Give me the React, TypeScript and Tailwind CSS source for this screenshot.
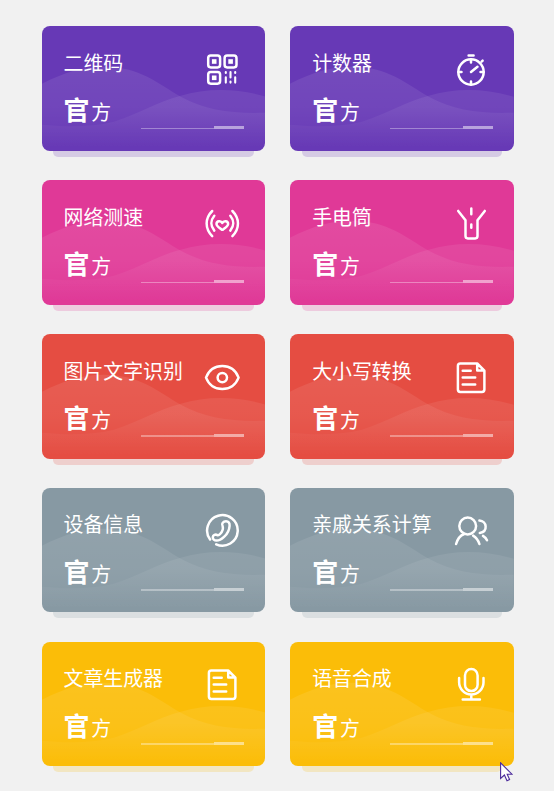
import type { ReactNode } from "react";

const QrIcon = () => (
  <>
    <rect x="4.2" y="3.6" width="11.9" height="11.8" rx="2.6" />
    <rect x="20.6" y="3.6" width="11.9" height="11.8" rx="2.6" />
    <rect x="4.2" y="19.9" width="11.9" height="11.8" rx="2.6" />
    <g fill="currentColor" stroke="none">
      <rect x="7.9" y="7.2" width="4.6" height="4.6" />
      <rect x="24.3" y="7.2" width="4.6" height="4.6" />
      <rect x="7.9" y="23.5" width="4.6" height="4.6" />
    </g>
    <path d="M21.8 20v1M21.8 25.2v5.4M26.5 20v5.4M26.5 29.6v1M31.2 20v1M31.2 25.2v5.4" strokeWidth="2.1" />
  </>
);

const StopwatchIcon = () => (
  <>
    <circle cx="18" cy="20" r="12.7" />
    <path d="M15.6 3.6h5M18 7.5v3M18 29.5v3M5.5 20h3M27.5 20h3M18 20l6.5-5.2M28.6 9.6l1-.9" />
  </>
);

const SpeedIcon = () => (
  <>
    <path d="M8.2 5C.8 12.5.8 22.5 8.2 30.2M10.3 9.8c-3.9 4.7-3.9 10.3 0 14.8M28.4 5c7.4 7.5 7.4 17.5 0 25.2M26.3 9.8c3.9 4.7 3.9 10.3 0 14.8" />
    <path d="M18.3 17c-1.1-2.6-5.8-2.6-5.8.9 0 2.1 3.1 4 4.9 5.5q.9.7 1.8 0c1.8-1.5 4.9-3.4 4.9-5.5 0-3.5-4.7-3.5-5.8-.9z" />
  </>
);

const FlashlightIcon = () => (
  <path d="M5.2 4.9l7.3 9.4v15.8q0 2.3 2.3 2.3h7.4q2.3 0 2.3-2.3V14.3l7.3-9.4M18.3 2.5v5.8M18.3 18.6v3.2" />
);

const EyeIcon = () => (
  <>
    <path d="M2 17.6C5 10.2 11 6.1 18.3 6.1S31.6 10.2 34.6 17.6C31.6 25 25.6 29.1 18.3 29.1S5 25 2 17.6z" />
    <circle cx="18.3" cy="17.6" r="4.7" />
  </>
);

const DocIcon = () => (
  <path d="M7.3 3.5h16.9l7.2 7.2v18.8q0 2.4-2.4 2.4H7.3q-2.4 0-2.4-2.4V5.9q0-2.4 2.4-2.4zM24.2 3.8v6.6h6.8M9.7 10.8h8M9.7 17.6h12.5M9.7 24.6h12.5" />
);

const PhoneIcon = () => (
  <>
    <path d="M6.1 26.5A15.3 15.3 0 1 1 12.2 31.4" />
    <path d="M18.6 13.2c-1.6-2.6.8-5 3.4-5 2.6 0 3.8 2 3.6 4.6-.3 4.3-2.3 8-5.3 10.8-2.4 2.3-5 4-7.8 4-2.2 0-3.9-1.4-3.7-3.4.2-2.2 2.6-3.2 4.6-2.1.9.5 1.7 0 2.6-.9 2-2 3.6-4.9 2.6-8z" />
  </>
);

const PeopleIcon = () => (
  <>
    <circle cx="14.7" cy="13" r="8.4" />
    <path d="M3.1 31c1.5-5.3 4.4-8.6 8.1-10M20.1 22.6c3 1.9 5.2 4.7 6.3 8.4M26.4 7.5c7.5.6 9 10.8.4 12.5M30 22.9c1.7 1 3.2 2.5 4 4.4" />
  </>
);

const MicIcon = () => (
  <>
    <rect x="12" y="2.1" width="12.6" height="22" rx="6.3" />
    <path d="M6.1 11v4.2a12.2 12.2 0 0 0 24.4 0V11M18.3 27.5v4.5M9.7 32.4h17.2" />
  </>
);

type Tool = { title: string; color: string; icon: ReactNode };

const tools: Tool[] = [
  { title: "二维码", color: "bg-[#6739b6]", icon: <QrIcon /> },
  { title: "计数器", color: "bg-[#6739b6]", icon: <StopwatchIcon /> },
  { title: "网络测速", color: "bg-[#e03997]", icon: <SpeedIcon /> },
  { title: "手电筒", color: "bg-[#e03997]", icon: <FlashlightIcon /> },
  { title: "图片文字识别", color: "bg-[#e54d42]", icon: <EyeIcon /> },
  { title: "大小写转换", color: "bg-[#e54d42]", icon: <DocIcon /> },
  { title: "设备信息", color: "bg-[#8799a3]", icon: <PhoneIcon /> },
  { title: "亲戚关系计算", color: "bg-[#8799a3]", icon: <PeopleIcon /> },
  { title: "文章生成器", color: "bg-[#fbbd08]", icon: <DocIcon /> },
  { title: "语音合成", color: "bg-[#fbbd08]", icon: <MicIcon /> },
];

const Waves = () => (
  <svg className="absolute inset-0 w-full h-full" viewBox="0 0 224 125" preserveAspectRatio="none">
    <defs>
      <linearGradient id="wave" gradientUnits="userSpaceOnUse" x1="0" y1="40" x2="0" y2="122">
        <stop offset="0" stopColor="#fff" stopOpacity="0.09" />
        <stop offset="0.5" stopColor="#fff" stopOpacity="0.065" />
        <stop offset="1" stopColor="#fff" stopOpacity="0" />
      </linearGradient>
    </defs>
    <path d="M0 58C22 47 40 41 62 41C98 41 116 58 139 71C165 85 190 88 224 87V125H0z" fill="url(#wave)" />
    <path d="M0 99C20 101 48 102 72 96C98 88 115 76 139 70C165 62 195 62 224 71V125H0z" fill="url(#wave)" />
  </svg>
);

const ToolCard = ({ title, color, icon }: Tool) => (
  <div>
    <div className={`relative h-[124.6px] rounded-[8px] overflow-hidden text-white ${color}`}>
      <Waves />
      <div className="relative flex justify-between pl-[22px] pr-[25px]">
        <div className="pt-[21.6px]">
          <div className="h-[30px] text-[19.9px] leading-[30px] whitespace-nowrap">{title}</div>
          <div className="mt-[11.4px] h-[42px] flex leading-[40px] whitespace-nowrap">
            <span className="text-[26px] font-bold">官</span>
            <span className="ml-[1.8px] pt-[3px] text-[19.9px]">方</span>
          </div>
        </div>
        <svg
          className="mt-[25.6px] w-9 h-9 shrink-0"
          viewBox="0 0 36 36"
          fill="none"
          stroke="currentColor"
          strokeWidth="2.5"
          strokeLinecap="round"
          strokeLinejoin="round"
        >
          {icon}
        </svg>
      </div>
      <div className="relative -mt-[5px] ml-[99.4px] w-[103px] h-[3px] flex items-end">
        <div className="grow h-[1.5px] bg-white/35" />
        <div className="w-[29.5px] h-[3px] bg-white/50" />
      </div>
    </div>
    <div className={`mx-[11.5px] h-[6px] rounded-b-[5px] opacity-20 ${color}`} />
  </div>
);

const App = () => {
  return (
    <main className="relative w-[554px] h-[791px] overflow-hidden bg-[#f1f1f1] pl-[41.5px] pt-[26.4px] font-['Noto_Sans_CJK_SC',sans-serif]">
      <div className="grid grid-cols-[223.7px_223.7px] gap-x-[25px] gap-y-[23.2px]">
        {tools.map((tool) => (
          <ToolCard key={tool.title} {...tool} />
        ))}
      </div>
      <svg className="absolute left-[500px] top-[762px] w-[13px] h-[20px]" viewBox="0 0 13 20">
        <path d="M.6 .8V16.5L4.4 13L7 18.8L9.6 17.6L7.2 12.2H12z" fill="#fff" stroke="#4b2a9b" strokeWidth="1.1" />
      </svg>
    </main>
  );
};

export default App;
